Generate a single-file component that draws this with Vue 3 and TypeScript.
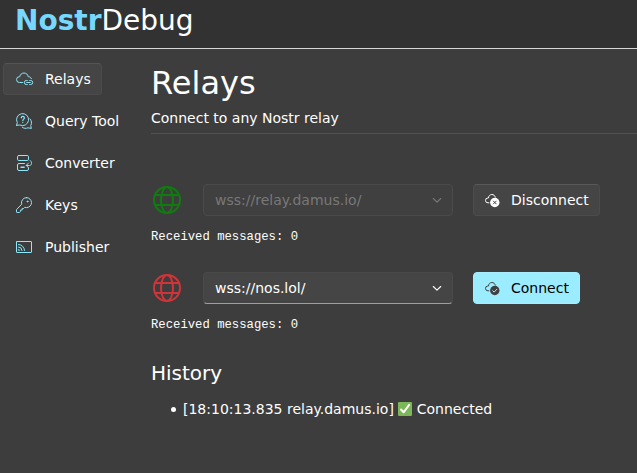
<script setup lang="ts">
import { ref } from 'vue'

interface NavItem { id: string; label: string }
interface Relay { url: string; connected: boolean; received: number }

const navItems: NavItem[] = [
  { id: 'relays', label: 'Relays' },
  { id: 'query', label: 'Query Tool' },
  { id: 'converter', label: 'Converter' },
  { id: 'keys', label: 'Keys' },
  { id: 'publisher', label: 'Publisher' },
]
const active = ref('relays')
const relays = ref<Relay[]>([
  { url: 'wss://relay.damus.io/', connected: true, received: 0 },
  { url: 'wss://nos.lol/', connected: false, received: 0 },
])
</script>

<template>
  <div class="app">
    <header class="header"><span class="brand"><b>Nostr</b>Debug</span></header>
    <div class="body">
      <nav class="nav">
        <button v-for="item in navItems" :key="item.id" class="btn nav-item" :class="{ active: active === item.id }" @click="active = item.id">
          <svg class="icon" viewBox="0 0 16 16" fill="none" stroke="currentColor" stroke-linecap="round" stroke-linejoin="round">
            <template v-if="item.id === 'relays'">
              <path d="M6.5 11.5H3.4A2.9 2.9 0 0 1 3.5 5.7H3.8C4.1 3.6 5.7 2 8 2s3.9 1.6 4.2 3.7h.3c1.4 0 2.4.7 2.9 2" />
              <path d="M11.3 9.5h-1a2 2 0 0 0 0 4h1M13.7 9.5h1a2 2 0 0 1 0 4h-1M10.7 11.5h3.6" />
            </template>
            <template v-else-if="item.id === 'query'">
              <path d="M.6 12.3l.7-2.8A6 6 0 1 1 3.9 12L.6 12.3z" />
              <path d="M5.2 4.9c.1-2 3.2-2 3.2 0 0 1.2-1.6 1.3-1.6 2.8M6.8 9.5v.1" stroke-width="1.2" />
              <path d="M6.2 14.2c1.6 1.3 3.9 1.5 5.7.6l3.5.6-.7-2.8c1.3-2.2 1-5-.7-6.7" />
            </template>
            <template v-else-if="item.id === 'converter'">
              <rect x="1.5" y=".5" width="11" height="5" rx="1.3" />
              <path d="M8.5 8.5H3A1.5 1.5 0 0 0 1.5 10v4A1.5 1.5 0 0 0 3 15.5h8a1.5 1.5 0 0 0 1.5-1.5v-1M14.2 5.5c1.2 1 1.3 1.9 1.3 3 0 1.2-.8 2-2 2h-3M12.5 8l-2.3 2.4 2.3 2.3" />
              <path d="M5 12.2h3.2" stroke-width="1.4" />
            </template>
            <template v-else-if="item.id === 'keys'">
              <path d="M10.5.6a5 5 0 0 1 0 10c-.6 0-1.2-.1-1.7-.3l-1.2 1.2H6.2v1.5H4.6v1.3l-1 1.2H1.1a.6.6 0 0 1-.6-.6v-2.3L5.7 7.2A5 5 0 0 1 10.5.6z" />
              <circle cx="11.5" cy="4.5" r=".5" fill="currentColor" />
            </template>
            <template v-else>
              <rect x=".5" y="2.5" width="15" height="11" rx=".5" />
              <path d="M2.5 5.5a6 6 0 0 1 6 6M2.5 8a3.5 3.5 0 0 1 3.5 3.5" />
              <path d="M2.5 10.3a1.2 1.2 0 0 1 1.2 1.2H2.5z" fill="currentColor" stroke-width=".4" />
            </template>
          </svg>
          <span>{{ item.label }}</span>
        </button>
      </nav>

      <main class="main">
        <h1>Relays</h1>
        <p class="sub">Connect to any Nostr relay</p>

        <section v-for="relay in relays" :key="relay.url" class="relay">
          <div class="row">
            <svg class="globe" :class="{ on: relay.connected }" viewBox="0 0 32 32" fill="none" stroke="currentColor" stroke-width="2">
              <circle cx="16" cy="16" r="13" />
              <ellipse cx="16" cy="16" rx="6" ry="13" />
              <path d="M3.9 11h24.2M3.9 21h24.2" />
            </svg>
            <div class="combo" :class="{ disabled: relay.connected }">
              <span>{{ relay.url }}</span>
              <svg class="chev" viewBox="0 0 12 12" fill="none" stroke="currentColor" stroke-width="1.1" stroke-linecap="round" stroke-linejoin="round"><path d="M2.3 4.5 6 8.2 9.7 4.5" /></svg>
            </div>
            <button class="btn action" :class="{ primary: !relay.connected }">
              <svg class="icon" viewBox="0 0 16 16" fill="none" stroke="currentColor" stroke-linecap="round" stroke-linejoin="round">
                <path d="M3.9 10.8H3A2.4 2.4 0 0 1 2.8 6h.6C3.7 3.9 5 2.5 6.8 2.5c1.8 0 3 1 3.5 2.6" />
                <circle cx="9.8" cy="10.5" r="4.7" fill="currentColor" stroke="none" />
                <path v-if="relay.connected" class="mark" d="M8.4 9.1l2.8 2.8M11.2 9.1l-2.8 2.8" />
                <path v-else class="mark" d="M7.7 10.8l1.4 1.3 2.8-2.9" />
              </svg>
              <span>{{ relay.connected ? 'Disconnect' : 'Connect' }}</span>
            </button>
          </div>
          <div class="received">Received messages: {{ relay.received }}</div>
        </section>

        <h2>History</h2>
        <ul class="history">
          <li>
            [18:10:13.835 relay.damus.io]
            <svg class="ok" viewBox="0 0 14 14" role="img" aria-label="OK"><rect width="14" height="14" rx="1" fill="#7cb857" /><path d="M3 7.5 5.6 10.3 11.1 2.9" fill="none" stroke="#fff" stroke-width="2" stroke-linecap="round" stroke-linejoin="round" /></svg>
            Connected
          </li>
        </ul>
      </main>
    </div>
  </div>
</template>

<style>
html, body { background: #3d3d3d; overflow: hidden; }
</style>

<style scoped>
.app { height: 473px; background: #3d3d3d; color: #fff; font: 14px/20px "DejaVu Sans", sans-serif; }
.header { box-sizing: border-box; height: 49px; padding: 3px 15px 0; background: #323232; border-bottom: 1px solid #d6d6d6; }
.brand { font-size: 28px; line-height: 36px; display: block; }
.brand b { color: #76d8ff; }
.body { display: flex; }
.nav { flex: none; width: 151px; padding: 14px 0 0 3px; box-sizing: border-box; display: flex; flex-direction: column; align-items: flex-start; gap: 10px; }
.btn { display: flex; align-items: center; gap: 10px; box-sizing: border-box; height: 32px; padding: 0 10px 0 11px; border: 1px solid transparent; border-radius: 4px; background: transparent; color: inherit; font: inherit; white-space: nowrap; }
.nav-item { gap: 13px; padding: 0 10px 0 12px; }
.nav-item.active { background: #454545; border-color: #4c4c4c; border-top-color: #555; }
.nav-item .icon { color: #8de7fa; }
.icon { width: 16px; height: 16px; flex: none; overflow: visible; }
.main { flex: 1; min-width: 0; }
h1 { margin: 12px 0 0; font-size: 32px; line-height: 44px; font-weight: 400; }
.sub { margin: 3px 0 47px; padding-bottom: 5px; border-bottom: 1px solid #525252; }
.relay { height: 88px; }
.row { display: flex; align-items: center; height: 38px; }
.globe { width: 32px; height: 32px; margin-right: 20px; color: #d13438; }
.globe.on { color: #107c10; }
.combo { display: flex; align-items: center; justify-content: space-between; width: 250px; height: 32px; box-sizing: border-box; padding: 0 9px 0 11px; margin-right: 20px; border: 1px solid #4a4a4a; border-bottom-color: #9e9e9e; border-radius: 4px; background: #454545; }
.combo.disabled { color: #787878; background: #404040; border-color: #4a4a4a; }
.chev { width: 12px; height: 12px; }
.action { background: #454545; border-color: #4c4c4c; border-top-color: #595959; }
.action.primary { background: #9cecff; border-color: #a6eeff; color: #000; }
.primary .icon { color: #404040; }
.mark { stroke: #454545; }
.primary .mark { stroke: #9cecff; }
.received { margin-top: 8px; font: 12.25px/20px "Liberation Mono", monospace; }
h2 { margin: 2px 0 0; font-size: 20px; line-height: 28px; font-weight: 400; }
.history { margin: 12px 0 0; padding-left: 20px; list-style: none; }
.history li::before { content: ""; display: inline-block; width: 5px; height: 5px; margin-right: 2.55px; border-radius: 50%; background: #fff; vertical-align: 2px; }
.ok { width: 14px; height: 14px; vertical-align: -2px; }
</style>
